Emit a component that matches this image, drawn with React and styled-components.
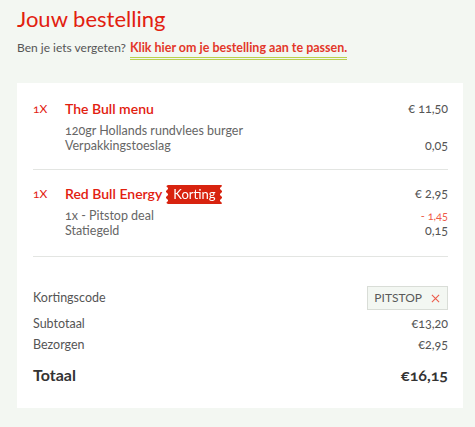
import React from "react";
import styled, { createGlobalStyle } from "styled-components";

const Global = createGlobalStyle`
  html, body { margin: 0; padding: 0; }
  body {
    background: #f3f7f2;
    font-family: Lato, "Open Sans", Arial, sans-serif;
    font-variant-numeric: oldstyle-nums;
    color: #555;
  }
`;

const Page = styled.div`
  padding: 5px 12px 19px 17px;
`;

const Title = styled.h1`
  margin: 0;
  font-size: 22px;
  line-height: 28px;
  font-weight: 400;
  color: #e2200f;
`;

const Intro = styled.p`
  margin: 5px 0 0;
  font-size: 12px;
  line-height: 20px;
  color: #555;
`;

const Link = styled.a`
  margin-left: 4px;
  color: #e3372a;
  font-size: 12.5px;
  font-weight: 700;
  text-decoration: none;
  padding-bottom: 5px;
  background:
    linear-gradient(#b9d04c, #b9d04c) left bottom / 100% 1px no-repeat,
    linear-gradient(#b9d04c, #b9d04c) left calc(100% - 2px) / 100% 1px no-repeat;
`;

const Card = styled.div`
  margin-top: 25px;
  background: #fff;
  padding: 2px 15px 21px 16px;
`;

const Item = styled.div`
  display: grid;
  grid-template-columns: 32px 1fr auto;
  align-items: center;
  padding: ${(p) => p.$top}px 0 ${(p) => p.$bottom}px;
  border-bottom: 1px solid #e3e5e2;
`;

const Qty = styled.span`
  font-size: 12px;
  line-height: 20px;
  color: #e2200f;
`;

const Name = styled.span`
  display: flex;
  align-items: center;
  gap: 4px;
  font-size: 14px;
  line-height: 20px;
  font-weight: 600;
  color: #e2200f;
`;

const Price = styled.span`
  line-height: ${(p) => (p.$main ? 20 : 15)}px;
  color: ${(p) => (p.$discount ? "#ef5a47" : "#555")};
  font-size: ${(p) => (p.$discount ? 11 : 12.5)}px;
  text-align: right;
`;

const Sub = styled.span`
  grid-column: 2;
  font-size: 12.5px;
  line-height: 15px;
  color: #666;
  margin-top: ${(p) => (p.$first ? 4 : 0)}px;
`;

const Badge = styled.span`
  display: inline-block;
  background: #d8230f;
  color: #fff;
  font-size: 13px;
  font-weight: 400;
  line-height: 19px;
  padding: 0 7px;
  border-radius: 2px;
  -webkit-mask:
    radial-gradient(circle 2px at 0 50%, transparent 1.6px, #000 2px) left / 51% 6px repeat-y,
    radial-gradient(circle 2px at 100% 50%, transparent 1.6px, #000 2px) right / 51% 6px repeat-y;
  mask:
    radial-gradient(circle 2px at 0 50%, transparent 1.6px, #000 2px) left / 51% 6px repeat-y,
    radial-gradient(circle 2px at 100% 50%, transparent 1.6px, #000 2px) right / 51% 6px repeat-y;
`;

const Summary = styled.div`
  padding-top: 29px;
  display: flex;
  flex-direction: column;
`;

const Row = styled.div`
  display: flex;
  justify-content: space-between;
  align-items: center;
  margin-top: ${(p) => p.$gap || 0}px;
  font-size: ${(p) => (p.$total ? 16 : 12.5)}px;
  line-height: ${(p) => (p.$total ? 24 : 20)}px;
  font-weight: ${(p) => (p.$total ? 700 : 400)};
  color: ${(p) => (p.$total ? "#333" : "#555")};
`;

const Code = styled.span`
  display: inline-flex;
  align-items: center;
  gap: 9px;
  height: 22px;
  padding: 0 7px 0 6px;
  border: 1px solid #d9ddd7;
  background: #f3f7f2;
  font-size: 12px;
  color: #5a5a5a;
`;

const Remove = styled.svg`
  width: 9px;
  height: 9px;
  stroke: #ec5a4a;
  stroke-width: 1.2;
`;

export default function App() {
  return (
    <>
      <Global />
      <Page>
        <Title>Jouw bestelling</Title>
        <Intro>
          Ben je iets vergeten?
          <Link href="#">Klik hier om je bestelling aan te passen.</Link>
        </Intro>
        <Card>
          <Item $top={14} $bottom={16}>
            <Qty>1X</Qty>
            <Name>The Bull menu</Name>
            <Price $main>€ 11,50</Price>
            <Sub $first>120gr Hollands rundvlees burger</Sub>
            <Price />
            <Sub>Verpakkingstoeslag</Sub>
            <Price>0,05</Price>
          </Item>
          <Item $top={14} $bottom={18}>
            <Qty>1X</Qty>
            <Name>
              Red Bull Energy <Badge>Korting</Badge>
            </Name>
            <Price $main>€ 2,95</Price>
            <Sub $first>1x - Pitstop deal</Sub>
            <Price $discount style={{ marginTop: 4 }}>- 1,45</Price>
            <Sub>Statiegeld</Sub>
            <Price>0,15</Price>
          </Item>
          <Summary>
            <Row>
              <span>Kortingscode</span>
              <Code>
                PITSTOP
                <Remove viewBox="0 0 10 10">
                  <path d="M1 1L9 9M9 1L1 9" />
                </Remove>
              </Code>
            </Row>
            <Row $gap={4}>
              <span>Subtotaal</span>
              <span>€13,20</span>
            </Row>
            <Row $gap={1}>
              <span>Bezorgen</span>
              <span>€2,95</span>
            </Row>
            <Row $gap={8} $total>
              <span>Totaal</span>
              <span>€16,15</span>
            </Row>
          </Summary>
        </Card>
      </Page>
    </>
  );
}
